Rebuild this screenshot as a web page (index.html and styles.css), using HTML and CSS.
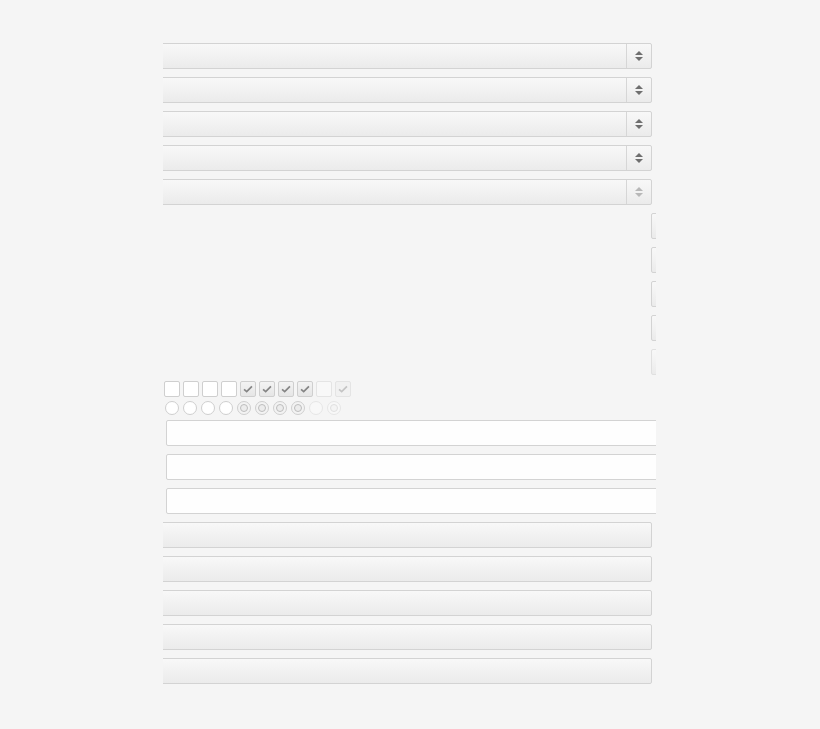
FILE: index.html
```html
<!DOCTYPE html>
<html>
<head>
<meta charset="utf-8">
<title>Form controls</title>
<link rel="stylesheet" href="styles.css">
</head>
<body>
<div class="panel">
  <div class="select"><span class="select-value"></span><span class="select-arrow"><i class="up"></i><i class="down"></i></span></div>
  <div class="select"><span class="select-value"></span><span class="select-arrow"><i class="up"></i><i class="down"></i></span></div>
  <div class="select"><span class="select-value"></span><span class="select-arrow"><i class="up"></i><i class="down"></i></span></div>
  <div class="select"><span class="select-value"></span><span class="select-arrow"><i class="up"></i><i class="down"></i></span></div>
  <div class="select is-disabled"><span class="select-value"></span><span class="select-arrow"><i class="up"></i><i class="down"></i></span></div>

  <div class="btn"></div>
  <div class="btn"></div>
  <div class="btn"></div>
  <div class="btn"></div>
  <div class="btn is-disabled"></div>

  <div class="checks">
    <span class="check"></span>
    <span class="check"></span>
    <span class="check"></span>
    <span class="check"></span>
    <span class="check is-on"><svg viewBox="0 0 16 16"><polyline points="3.5,8.5 6.5,11 12.5,5"/></svg></span>
    <span class="check is-on"><svg viewBox="0 0 16 16"><polyline points="3.5,8.5 6.5,11 12.5,5"/></svg></span>
    <span class="check is-on"><svg viewBox="0 0 16 16"><polyline points="3.5,8.5 6.5,11 12.5,5"/></svg></span>
    <span class="check is-on"><svg viewBox="0 0 16 16"><polyline points="3.5,8.5 6.5,11 12.5,5"/></svg></span>
    <span class="check is-disabled"></span>
    <span class="check is-on is-disabled"><svg viewBox="0 0 16 16"><polyline points="3.5,8.5 6.5,11 12.5,5"/></svg></span>
  </div>

  <div class="radios">
    <span class="radio"></span>
    <span class="radio"></span>
    <span class="radio"></span>
    <span class="radio"></span>
    <span class="radio is-on"></span>
    <span class="radio is-on"></span>
    <span class="radio is-on"></span>
    <span class="radio is-on"></span>
    <span class="radio is-disabled"></span>
    <span class="radio is-on is-disabled"></span>
  </div>

  <div class="field"></div>
  <div class="field"></div>
  <div class="field"></div>

  <div class="bar"></div>
  <div class="bar"></div>
  <div class="bar"></div>
  <div class="bar"></div>
  <div class="bar"></div>
</div>
</body>
</html>
```
FILE: styles.css
```css
html, body {
  margin: 0;
  background: #f5f5f5;
  font-family: "Liberation Sans", Arial, sans-serif;
}

.panel {
  width: 493px;
  margin-left: 163px;
  padding-top: 43px;
  overflow: hidden;
}

/* dropdowns */
.select {
  display: flex;
  box-sizing: border-box;
  width: 493px;
  height: 26px;
  margin: 0 0 8px -4px;
  border: 1px solid #d3d3d3;
  border-radius: 2px;
  background: linear-gradient(#f8f8f8, #ebebeb);
}
.select-value {
  flex: 1;
}
.select-arrow {
  width: 24px;
  border-left: 1px solid #d6d6d6;
  display: flex;
  flex-direction: column;
  align-items: center;
  justify-content: center;
  gap: 2px;
}
.select-arrow i {
  width: 0;
  height: 0;
  border-left: 4px solid transparent;
  border-right: 4px solid transparent;
}
.select-arrow .up { border-bottom: 4px solid #6f6f6f; }
.select-arrow .down { border-top: 4px solid #6f6f6f; }
.select.is-disabled .select-arrow .up { border-bottom-color: #b8b8b8; }
.select.is-disabled .select-arrow .down { border-top-color: #b8b8b8; }

/* buttons, mostly off to the right */
.btn {
  box-sizing: border-box;
  width: 40px;
  height: 26px;
  margin: 0 0 8px 488px;
  border: 1px solid #d3d3d3;
  border-radius: 2px;
  background: linear-gradient(#f8f8f8, #ebebeb);
}
.btn.is-disabled { border-color: #e0e0e0; }

/* checkboxes */
.checks {
  display: flex;
  gap: 3px;
  margin: -2px 0 0 1px;
  height: 16px;
}
.check {
  box-sizing: border-box;
  width: 16px;
  height: 16px;
  border: 1px solid #cfcfcf;
  border-radius: 2px;
  background: #fff;
  display: flex;
}
.check svg {
  width: 14px;
  height: 14px;
}
.check polyline {
  fill: none;
  stroke: #858585;
  stroke-width: 2;
}
.check.is-on {
  background: linear-gradient(#f3f3f3, #e6e6e6);
}
.check.is-disabled {
  border-color: #e4e4e4;
  background: #f8f8f8;
}
.check.is-on.is-disabled { background: #f1f1f1; }
.check.is-on.is-disabled polyline { stroke: #c4c4c4; }

/* radios */
.radios {
  display: flex;
  gap: 4px;
  margin: 4px 0 0 2px;
  height: 14px;
}
.radio {
  box-sizing: border-box;
  width: 14px;
  height: 14px;
  border: 1px solid #cfcfcf;
  border-radius: 50%;
  background: #fff;
  display: flex;
  align-items: center;
  justify-content: center;
}
.radio.is-on::after {
  content: "";
  box-sizing: border-box;
  width: 8px;
  height: 8px;
  border: 1px solid #bdbdbd;
  border-radius: 50%;
  background: #ececec;
}
.radio.is-on { background: #f3f3f3; }
.radio.is-disabled {
  border-color: #e6e6e6;
  background: #f8f8f8;
}
.radio.is-on.is-disabled::after {
  border-color: #e0e0e0;
  background: #f4f4f4;
}

/* text fields */
.field {
  box-sizing: border-box;
  width: 520px;
  height: 26px;
  margin: 5px 0 0 3px;
  border: 1px solid #d3d3d3;
  border-radius: 2px;
  background: #fefefe;
}
.field + .field { margin-top: 8px; }

/* plain bars */
.bar {
  box-sizing: border-box;
  width: 493px;
  height: 26px;
  margin: 8px 0 0 -4px;
  border: 1px solid #d3d3d3;
  border-radius: 2px;
  background: linear-gradient(#f8f8f8, #ebebeb);
}
```
